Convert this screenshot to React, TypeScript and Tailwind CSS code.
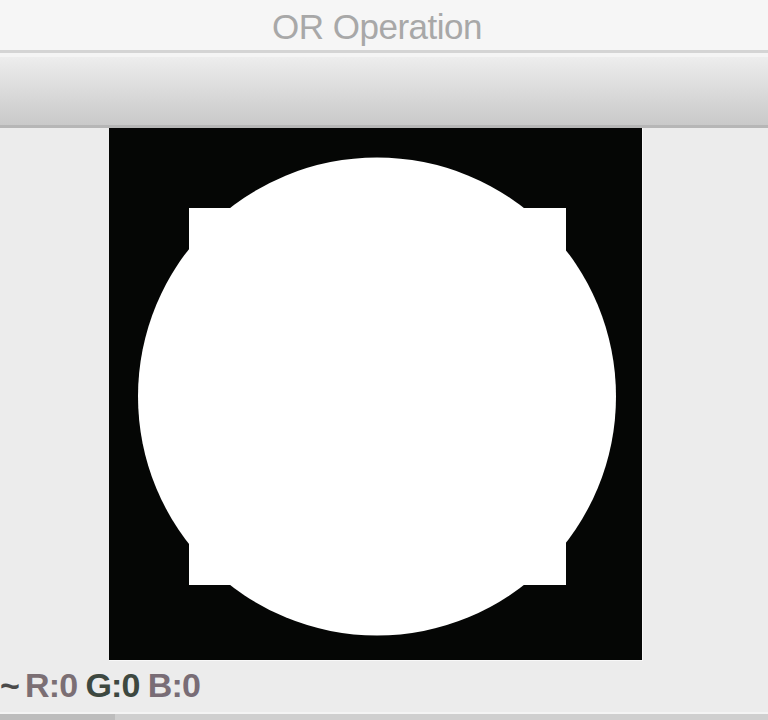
export default function App() {
  return (
    <div className="w-[768px] h-[720px] overflow-hidden bg-[#ececec] flex flex-col font-['Liberation_Sans',Arial,sans-serif]">
      {/* window title */}
      <div className="h-[50px] bg-[#f6f6f6] flex items-center justify-center">
        <span className="text-[35px] leading-none text-[#a8a8a8] tracking-[-0.5px] mr-[14px] pt-[2px]">OR Operation</span>
      </div>
      <div className="h-[3px] bg-[#d4d4d4]" />
      <div className="h-[4px] bg-[#f4f4f4]" />
      {/* toolbar */}
      <div className="h-[68px] bg-gradient-to-b from-[#ededed] to-[#c9c9c9]" />
      <div className="h-[3px] bg-[#b6b6b6]" />

      {/* image area */}
      <div className="flex-1 flex flex-col">
        <div className="ml-[109px] w-[534px] h-[533px] bg-[#050605] border-r border-b border-r-[#f8f8f8] border-b-[#f8f8f8]">
          <svg width="533" height="533" viewBox="0 0 533 533">
            <rect x="80" y="80" width="377" height="377" fill="#ffffff" />
            <circle cx="268" cy="268.5" r="239" fill="#ffffff" />
          </svg>
        </div>
        <div className="h-[48px] flex items-center">
          <span className="text-[34px] font-bold leading-none text-[#4a4a4a] tracking-[-0.8px] flex items-baseline">
            <span>~</span>
            <span className="ml-[6px] text-[#7b6f74]">R:0</span>
            <span className="ml-[8px] text-[#3d4840]">G:0</span>
            <span className="ml-[8px] text-[#796d76]">B:0</span>
          </span>
        </div>
        <div className="h-[2px] bg-[#f4f4f4] mt-auto" />
        <div className="h-[6px] flex">
          <div className="w-[115px] bg-[#bdbdbd]" />
          <div className="flex-1 bg-[#cfcfcf]" />
        </div>
      </div>
    </div>
  );
}
